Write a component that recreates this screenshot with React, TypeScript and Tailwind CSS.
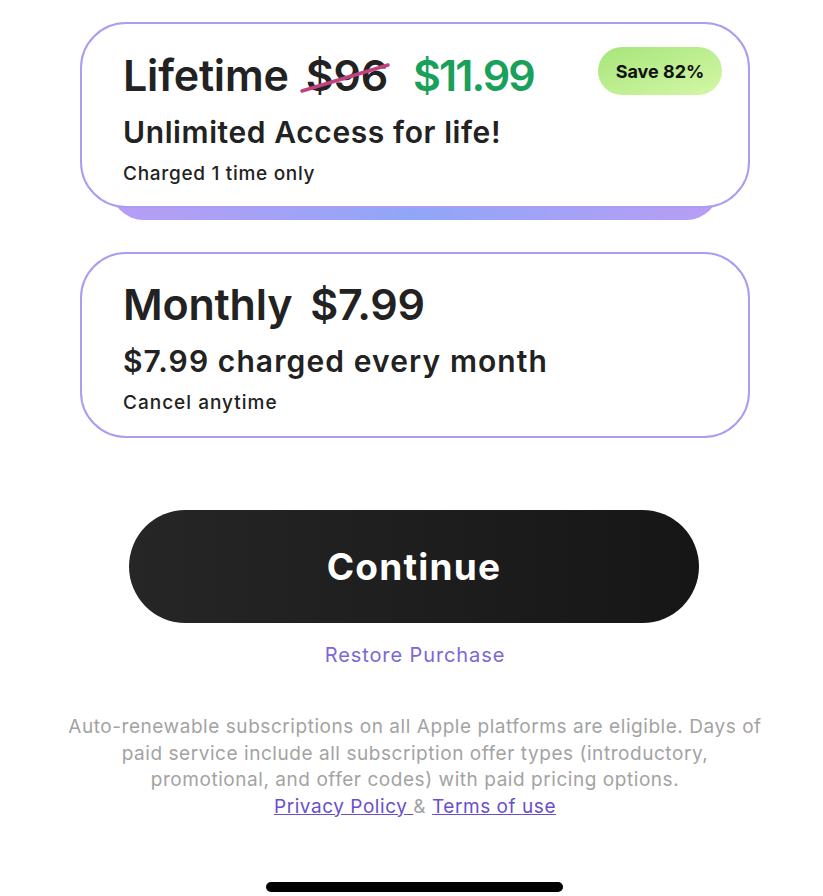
import React from "react";

const font = { fontFamily: "Inter, 'Noto Sans', sans-serif" };

export default function App() {
  return (
    <div className="w-[823px] h-[896px] bg-white relative overflow-hidden" style={font}>
      <div className="ml-[80px] w-[670px] flex flex-col">
        {/* Lifetime card */}
        <div className="relative mt-[22px]">
          <div className="absolute left-[30px] right-[30px] bottom-[-12px] h-[60px] rounded-b-[34px] bg-gradient-to-r from-[#b89df5] via-[#8fa6f8] to-[#b89df5]" />
          <div className="relative h-[186px] rounded-[46px] border-2 border-[#ab9df0] bg-white pl-[41px] pr-[26px] pt-[21px]">
            <div className="flex items-start justify-between">
              <div className="flex items-baseline text-[43px] font-semibold text-[#222] tracking-[-0.2px] leading-[60px]">
                <span>Lifetime</span>
                <span className="relative ml-[17px]">
                  $96
                  <svg className="absolute left-[-8px] top-[12px]" width="96" height="40" viewBox="0 0 96 40">
                    <path d="M4 34 L90 8" stroke="#c2427f" strokeWidth="3.5" strokeLinecap="round" />
                  </svg>
                </span>
                <span className="ml-[25px] text-[#19a05b] tracking-[-2px]">$11.99</span>
              </div>
              <div className="mt-[2px] h-[48px] w-[124px] rounded-full bg-gradient-to-br from-[#a6e57a] to-[#d4f7a6] flex items-center justify-center text-[18px] font-bold text-[#111]">
                Save 82%
              </div>
            </div>
            <div className="mt-[9px] text-[30px] font-semibold text-[#222] leading-[36px] tracking-[0.6px]">
              Unlimited Access for life!
            </div>
            <div className="mt-[11px] text-[19px] font-medium text-[#222] leading-[26px] tracking-[0.7px]">
              Charged 1 time only
            </div>
          </div>
        </div>

        {/* Monthly card */}
        <div className="mt-[44px] h-[186px] rounded-[46px] border-2 border-[#ab9df0] bg-white pl-[41px] pt-[20px]">
          <div className="flex items-baseline text-[43px] font-semibold text-[#222] leading-[60px] tracking-[-0.2px]">
            <span>Monthly</span>
            <span className="ml-[18px]">$7.99</span>
          </div>
          <div className="mt-[9px] text-[30px] font-semibold text-[#222] leading-[36px] tracking-[1.1px]">
            $7.99 charged every month
          </div>
          <div className="mt-[11px] text-[19px] font-medium text-[#222] leading-[26px] tracking-[1px]">
            Cancel anytime
          </div>
        </div>

        {/* Continue */}
        <div className="mt-[72px] flex justify-center">
          <div className="ml-[-2px] w-[570px] h-[113px] rounded-full bg-gradient-to-r from-[#262626] to-[#161616] flex items-center justify-center text-white text-[37px] font-bold tracking-[1.2px]">
            Continue
          </div>
        </div>

        <div className="mt-[18px] text-center text-[20px] text-[#7b68d4] leading-[28px] tracking-[0.9px]">
          Restore Purchase
        </div>

        <div className="mt-[45px] text-center text-[19px] text-[#a3a3a3] leading-[26.6px] tracking-[0.55px] mx-[-40px]">
          Auto-renewable subscriptions on all Apple platforms are eligible. Days of
          <br />
          paid service include all subscription offer types (introductory,
          <br />
          promotional, and offer codes) with paid pricing options.
          <br />
          <span className="text-[#6a4fcb] underline">Privacy Policy </span>
          <span> &amp; </span>
          <span className="text-[#6a4fcb] underline">Terms of use</span>
        </div>
      </div>

      <div className="absolute left-[266px] top-[882px] w-[297px] h-[10px] rounded-full bg-black" />
    </div>
  );
}
